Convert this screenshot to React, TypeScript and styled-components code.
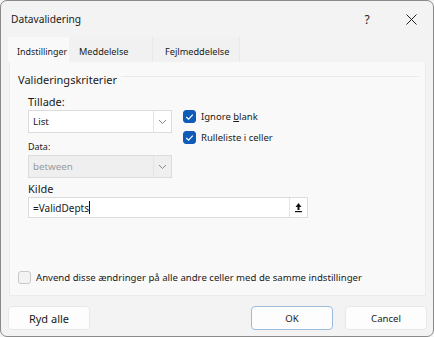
import React from "react";
import styled, { createGlobalStyle } from "styled-components";

const Global = createGlobalStyle`
  html, body { margin: 0; padding: 0; background: #f3f3f3; }
  body { font-family: "Noto Sans", "Open Sans", sans-serif; font-size: 11px; color: #1a1a1a; }
  * { box-sizing: border-box; }
`;

const Window = styled.div`
  width: 434px;
  height: 337px;
  background: #f3f3f3;
  border: 1px solid #8a8a8a;
  border-radius: 7px;
  display: flex;
  flex-direction: column;
  overflow: hidden;
`;

const TitleBar = styled.div`
  height: 36px;
  display: flex;
  align-items: center;
  padding-left: 10px;
`;

const Title = styled.div`
  flex: 1;
  font-size: 10.2px;
`;

const TitleBtn = styled.div`
  width: 44px;
  height: 36px;
  display: flex;
  align-items: center;
  justify-content: center;
  font-size: 12px;
  color: #222;
`;

const Tabs = styled.div`
  display: flex;
  padding-left: 7px;
  height: 25px;
  align-items: stretch;
`;

const Tab = styled.div<{ $active?: boolean; $w: number; $pad: number }>`
  width: ${(p) => p.$w}px;
  padding-left: ${(p) => p.$pad}px;
  padding-top: 3px;
  display: flex;
  align-items: center;
  background: ${(p) => (p.$active ? "#f9f9f9" : "#f1f1f1")};
  border-right: 1px solid ${(p) => (p.$active ? "transparent" : "#e9e9e9")};
  font-size: ${(p) => (p.$active ? 8.9 : 9.2)}px;
  white-space: nowrap;
  overflow: hidden;
`;

const Panel = styled.div`
  margin: 0 7px 0 8px;
  height: 234px;
  background: #f9f9f9;
  border: 1px solid #ececec;
  border-top: none;
  padding: 9px 0 0 8px;
  display: flex;
  flex-direction: column;
`;

const GroupHead = styled.div`
  display: flex;
  align-items: center;
  gap: 4px;
  padding-right: 6px;
  font-size: 11px;
  height: 16px;
  &::after {
    content: "";
    flex: 1;
    height: 1px;
    margin-top: -5px;
    background: #ebebeb;
  }
`;

const Criteria = styled.div`
  padding-left: 10px;
  display: flex;
  gap: 11px;
`;

const Col = styled.div`
  display: flex;
  flex-direction: column;
`;

const Label = styled.div<{ $small?: boolean; $gap: number }>`
  font-size: ${(p) => (p.$small ? 9 : 11)}px;
  margin-top: ${(p) => p.$gap}px;
  height: ${(p) => (p.$small ? 15 : 16)}px;
  display: flex;
  align-items: center;
  color: #1a1a1a;
`;

const Combo = styled.div<{ $disabled?: boolean }>`
  width: 144px;
  height: 23px;
  margin-top: 1px;
  border: 1px solid #dcdcdc;
  background: ${(p) => (p.$disabled ? "#efefef" : "#ffffff")};
  display: flex;
  align-items: stretch;
  font-size: 9.8px;
  color: ${(p) => (p.$disabled ? "#9a9a9a" : "#1a1a1a")};
`;

const ComboText = styled.div`
  flex: 1;
  padding-left: 4px;
  display: flex;
  align-items: center;
`;

const ComboArrow = styled.div`
  width: 18px;
  border-left: 1px solid #e4e4e4;
  display: flex;
  align-items: center;
  justify-content: center;
`;

const Checks = styled.div`
  margin-top: 23px;
  display: flex;
  flex-direction: column;
  gap: 8px;
`;

const CheckRow = styled.div`
  display: flex;
  align-items: center;
  gap: 5px;
  font-size: 9.5px;
`;

const Box = styled.div<{ $checked?: boolean }>`
  width: 13px;
  height: 13px;
  border-radius: 3px;
  background: ${(p) => (p.$checked ? "#0f5cb8" : "#f3f3f3")};
  border: 1px solid ${(p) => (p.$checked ? "#0f5cb8" : "#c9c9c9")};
  display: flex;
  align-items: center;
  justify-content: center;
  flex-shrink: 0;
`;

const Source = styled.div`
  padding-left: 10px;
  display: flex;
  flex-direction: column;
`;

const Input = styled.div`
  width: 280px;
  height: 21px;
  margin-top: 1px;
  border: 1px solid #dcdcdc;
  background: #fff;
  display: flex;
  align-items: stretch;
  font-size: 10px;
`;

const InputText = styled.div`
  flex: 1;
  padding-left: 4px;
  display: flex;
  align-items: center;
`;

const Caret = styled.span`
  display: inline-block;
  width: 1px;
  height: 13px;
  background: #111;
`;

const PickBtn = styled.div`
  width: 18px;
  border-left: 1px solid #e4e4e4;
  display: flex;
  align-items: center;
  justify-content: center;
`;

const ApplyRow = styled.div`
  margin-top: auto;
  margin-bottom: 11px;
  display: flex;
  align-items: center;
  gap: 5px;
  font-size: 9.6px;
`;

const Footer = styled.div`
  display: flex;
  padding: 10px 6px 0 7px;
  gap: 12px;
`;

const Button = styled.div<{ $primary?: boolean; $push?: boolean; $size: number }>`
  width: 82px;
  height: 24px;
  background: #fdfdfd;
  border: 1px solid ${(p) => (p.$primary ? "#9bbcdc" : "#e8e8e8")};
  border-radius: 4px;
  display: flex;
  align-items: center;
  justify-content: center;
  font-size: ${(p) => p.$size}px;
  margin-left: ${(p) => (p.$push ? "auto" : "0")};
`;

const Chevron = () => (
  <svg width="9" height="6" viewBox="0 0 9 6">
    <path d="M1 1 L4.5 4.5 L8 1" fill="none" stroke="#8a8a8a" strokeWidth="1" />
  </svg>
);

const Tick = () => (
  <svg width="9" height="8" viewBox="0 0 9 8">
    <path d="M1.3 4 L3.6 6.2 L7.8 1.6" fill="none" stroke="#ffffff" strokeWidth="1.2" />
  </svg>
);

const PickIcon = () => (
  <svg width="9" height="11" viewBox="0 0 9 11">
    <path d="M4.5 1 L1.5 5 H3.5 V8 H5.5 V5 H7.5 Z" fill="#111" />
    <rect x="1" y="9" width="7" height="1.2" fill="#111" />
  </svg>
);

export default function App() {
  return (
    <>
      <Global />
      <Window>
        <TitleBar>
          <Title>Datavalidering</Title>
          <TitleBtn>?</TitleBtn>
          <TitleBtn>
            <svg width="11" height="11" viewBox="0 0 11 11">
              <path d="M0.5 0.5 L10.5 10.5 M10.5 0.5 L0.5 10.5" stroke="#222" strokeWidth="1" />
            </svg>
          </TitleBtn>
        </TitleBar>
        <Tabs>
          <Tab $active $w={61} $pad={9}>Indstillinger</Tab>
          <Tab $w={84} $pad={10}>Meddelelse</Tab>
          <Tab $w={87} $pad={12}>Fejlmeddelelse</Tab>
        </Tabs>
        <Panel>
          <GroupHead>Valideringskriterier</GroupHead>
          <Criteria>
            <Col>
              <Label $gap={6}>Tillade:</Label>
              <Combo>
                <ComboText>List</ComboText>
                <ComboArrow><Chevron /></ComboArrow>
              </Combo>
              <Label $small $gap={6}>Data:</Label>
              <Combo $disabled>
                <ComboText>between</ComboText>
                <ComboArrow><Chevron /></ComboArrow>
              </Combo>
            </Col>
            <Checks>
              <CheckRow>
                <Box $checked><Tick /></Box>
                <span>Ignore <u>b</u>lank</span>
              </CheckRow>
              <CheckRow>
                <Box $checked><Tick /></Box>
                <span>Rulleliste i celler</span>
              </CheckRow>
            </Checks>
          </Criteria>
          <Source>
            <Label $gap={2}>Kilde</Label>
            <Input>
              <InputText>=ValidDepts<Caret /></InputText>
              <PickBtn><PickIcon /></PickBtn>
            </Input>
          </Source>
          <ApplyRow>
            <Box />
            <span>Anvend disse ændringer på alle andre celler med de samme indstillinger</span>
          </ApplyRow>
        </Panel>
        <Footer>
          <Button $size={11}>Ryd alle</Button>
          <Button $primary $push $size={9.6}>OK</Button>
          <Button $size={9.6}>Cancel</Button>
        </Footer>
      </Window>
    </>
  );
}
